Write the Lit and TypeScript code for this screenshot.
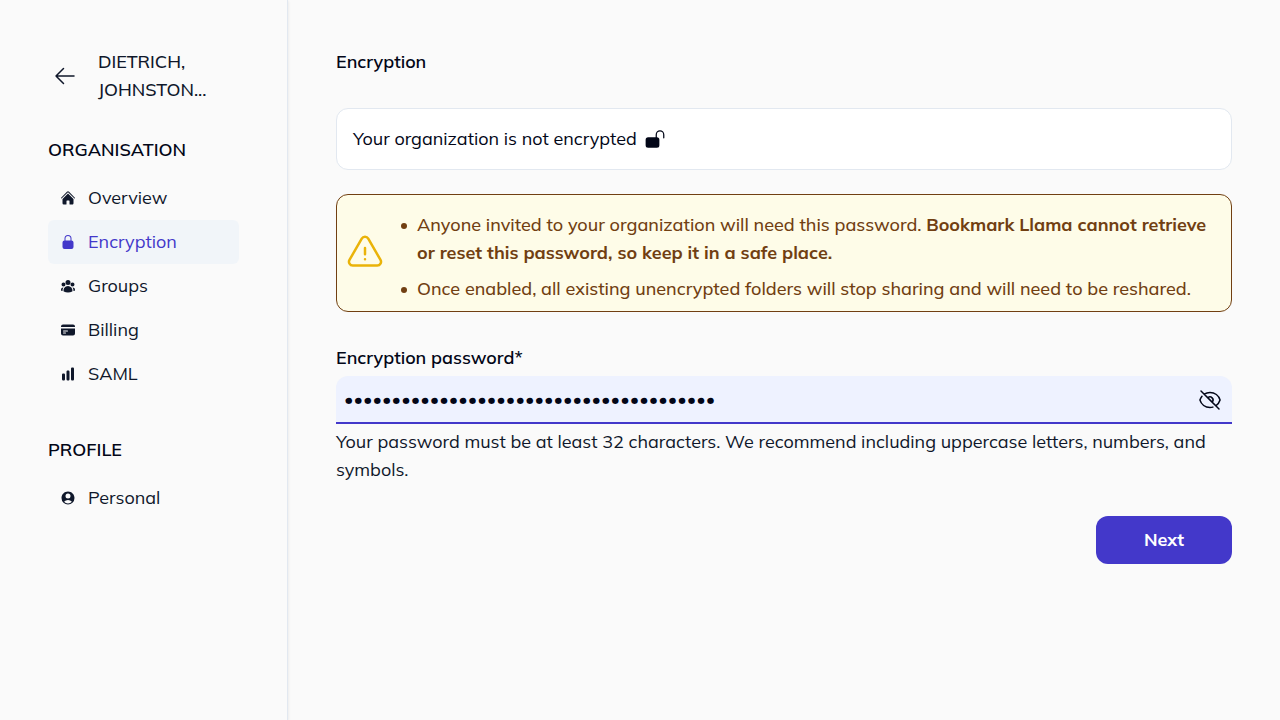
import { LitElement, html, css, svg } from "lit";
import { customElement, state } from "lit/decorators.js";
import { classMap } from "lit/directives/class-map.js";

interface NavItem {
  label: string;
  icon: unknown;
  active?: boolean;
}

interface NavGroup {
  title: string;
  items: NavItem[];
}

const homeIcon = svg`<svg class="icon" viewBox="0 0 24 24" fill="currentColor" aria-hidden="true">
  <path d="M11.47 3.84a.75.75 0 0 1 1.06 0l8.69 8.69a.75.75 0 1 0 1.06-1.06l-8.69-8.69a2.25 2.25 0 0 0-3.18 0l-8.69 8.69a.75.75 0 0 0 1.06 1.06l8.69-8.69Z"/>
  <path d="m12 5.43 8.16 8.16.09.09v6.2c0 1.03-.84 1.87-1.88 1.87H15a.75.75 0 0 1-.75-.75v-4.5a.75.75 0 0 0-.75-.75h-3a.75.75 0 0 0-.75.75V21a.75.75 0 0 1-.75.75H5.63a1.88 1.88 0 0 1-1.88-1.88v-6.2l.09-.08L12 5.43Z"/>
</svg>`;

const lockIcon = svg`<svg class="icon" viewBox="0 0 24 24" fill="currentColor" aria-hidden="true">
  <path fill-rule="evenodd" d="M12 1.5a5.25 5.25 0 0 0-5.25 5.25v3a3 3 0 0 0-3 3v6.75a3 3 0 0 0 3 3h10.5a3 3 0 0 0 3-3v-6.75a3 3 0 0 0-3-3v-3A5.25 5.25 0 0 0 12 1.5Zm3.75 8.25v-3a3.75 3.75 0 1 0-7.5 0v3h7.5Z"/>
</svg>`;

const groupIcon = svg`<svg class="icon" viewBox="0 0 24 24" fill="currentColor" aria-hidden="true">
  <path fill-rule="evenodd" d="M8.25 6.75a3.75 3.75 0 1 1 7.5 0 3.75 3.75 0 0 1-7.5 0ZM15.75 9.75a3 3 0 1 1 6 0 3 3 0 0 1-6 0ZM2.25 9.75a3 3 0 1 1 6 0 3 3 0 0 1-6 0ZM6.31 15.117A6.745 6.745 0 0 1 12 12a6.745 6.745 0 0 1 6.709 7.498.75.75 0 0 1-.372.568A12.696 12.696 0 0 1 12 21.75c-2.305 0-4.47-.612-6.337-1.684a.75.75 0 0 1-.372-.568 6.787 6.787 0 0 1 1.019-4.38Z"/>
  <path d="M5.082 14.254a8.287 8.287 0 0 0-1.308 5.135 9.687 9.687 0 0 1-1.764-.44l-.115-.04a.563.563 0 0 1-.373-.487l-.01-.121a3.75 3.75 0 0 1 3.57-4.047ZM20.226 19.389a8.287 8.287 0 0 0-1.308-5.135 3.75 3.75 0 0 1 3.57 4.047l-.01.121a.563.563 0 0 1-.373.486l-.115.04c-.567.2-1.156.349-1.764.441Z"/>
</svg>`;

const cardIcon = svg`<svg class="icon" viewBox="0 0 24 24" fill="currentColor" aria-hidden="true">
  <path d="M4.5 3.75a3 3 0 0 0-3 3v.75h21v-.75a3 3 0 0 0-3-3h-15Z"/>
  <path fill-rule="evenodd" d="M22.5 9.75h-21v7.5a3 3 0 0 0 3 3h15a3 3 0 0 0 3-3v-7.5Zm-18 3.75a.75.75 0 0 1 .75-.75h6a.75.75 0 0 1 0 1.5h-6a.75.75 0 0 1-.75-.75Zm.75 2.25a.75.75 0 0 0 0 1.5h3a.75.75 0 0 0 0-1.5h-3Z"/>
</svg>`;

const chartIcon = svg`<svg class="icon" viewBox="0 0 24 24" fill="currentColor" aria-hidden="true">
  <path d="M18.375 2.25c-1.035 0-1.875.84-1.875 1.875v15.75c0 1.035.84 1.875 1.875 1.875h.75c1.035 0 1.875-.84 1.875-1.875V4.125c0-1.036-.84-1.875-1.875-1.875h-.75ZM9.75 8.625c0-1.036.84-1.875 1.875-1.875h.75c1.036 0 1.875.84 1.875 1.875v11.25c0 1.035-.84 1.875-1.875 1.875h-.75a1.875 1.875 0 0 1-1.875-1.875V8.625ZM3 13.125c0-1.036.84-1.875 1.875-1.875h.75c1.036 0 1.875.84 1.875 1.875v6.75c0 1.035-.84 1.875-1.875 1.875h-.75A1.875 1.875 0 0 1 3 19.875v-6.75Z"/>
</svg>`;

const userIcon = svg`<svg class="icon" viewBox="0 0 24 24" fill="currentColor" aria-hidden="true">
  <path fill-rule="evenodd" d="M18.685 19.097A9.723 9.723 0 0 0 21.75 12c0-5.385-4.365-9.75-9.75-9.75S2.25 6.615 2.25 12a9.723 9.723 0 0 0 3.065 7.097A9.716 9.716 0 0 0 12 21.75a9.716 9.716 0 0 0 6.685-2.653Zm-12.54-1.285A7.486 7.486 0 0 1 12 15a7.486 7.486 0 0 1 5.855 2.812A8.224 8.224 0 0 1 12 20.25a8.224 8.224 0 0 1-5.855-2.438ZM15.75 9a3.75 3.75 0 1 1-7.5 0 3.75 3.75 0 0 1 7.5 0Z"/>
</svg>`;

const groups: NavGroup[] = [
  {
    title: "ORGANISATION",
    items: [
      { label: "Overview", icon: homeIcon },
      { label: "Encryption", icon: lockIcon, active: true },
      { label: "Groups", icon: groupIcon },
      { label: "Billing", icon: cardIcon },
      { label: "SAML", icon: chartIcon },
    ],
  },
  { title: "PROFILE", items: [{ label: "Personal", icon: userIcon }] },
];

@customElement("app-root")
export class AppRoot extends LitElement {
  static styles = css`
    :host {
      display: flex;
      min-height: 100vh;
      background: #fafafa;
      color: #020617;
      font-family: Mulish, "Noto Sans", sans-serif;
      font-size: 18px;
      line-height: 28px;
    }
    *, *::before, *::after { box-sizing: border-box; }
    h1, h2, p, ul { margin: 0; padding: 0; font-size: inherit; }
    button, input { font: inherit; color: inherit; border: 0; }
    button { cursor: pointer; }
    svg { display: block; flex: none; }

    .sidebar {
      flex: none;
      width: 288px;
      padding: 48px;
      border-right: 1px solid #e2e8f0;
      box-shadow: 0 1px 3px rgba(0, 0, 0, 0.1);
    }
    .org {
      display: flex;
      align-items: center;
      gap: 16px;
      margin-bottom: 32px;
      color: #0f172a;
      font-weight: 500;
    }
    .back {
      display: grid;
      place-items: center;
      width: 34px;
      height: 34px;
      padding: 0;
      background: none;
    }
    .org-name { flex: 1; min-width: 0; }
    .group { margin-bottom: 40px; }
    .group-title { margin-bottom: 12px; font-weight: 600; }
    .list { list-style: none; }
    .item {
      display: flex;
      align-items: center;
      gap: 12px;
      padding: 8px 12px;
      border-radius: 6px;
      color: #0f172a;
      text-decoration: none;
    }
    .item.active { background: #f1f5f9; color: #4338ca; }
    .icon { width: 16px; height: 16px; }

    .main {
      flex: 1;
      min-width: 0;
      padding: 48px;
    }
    .title { margin-bottom: 32px; font-weight: 600; }
    .status {
      display: flex;
      align-items: center;
      gap: 8px;
      margin-bottom: 24px;
      padding: 16px;
      border: 1px solid #e2e8f0;
      border-radius: 12px;
      background: #fff;
    }
    .warning {
      display: flex;
      align-items: center;
      gap: 20px;
      margin-bottom: 32px;
      padding: 8px 16px 8px 8px;
      border: 1px solid #713f12;
      border-radius: 12px;
      background: #fefce8;
      color: #713f12;
      font-weight: 500;
    }
    .warning strong { font-weight: 700; }
    .warning-icon { color: #eab308; }
    .points {
      display: grid;
      gap: 8px;
      padding-top: 8px;
      list-style: none;
    }
    .point { display: flex; gap: 10px; margin-left: -4px; }
    .point::before {
      content: "";
      flex: none;
      width: 6px;
      height: 6px;
      margin-top: 12px;
      border-radius: 50%;
      background: currentColor;
    }
    .label { display: block; margin-bottom: 4px; font-weight: 600; }
    .field {
      display: flex;
      align-items: center;
      height: 48px;
      padding: 0 8px;
      border-radius: 12px 12px 0 0;
      background: linear-gradient(#4338ca, #4338ca) bottom / 100% 2px no-repeat #eef2ff;
    }
    .password {
      flex: 1;
      min-width: 0;
      padding: 0;
      background: none;
      outline: none;
    }
    .reveal { padding: 0 2px; background: none; }
    .hint { margin: 4px 0 32px; color: #0f172a; }
    .actions { display: flex; justify-content: flex-end; }
    .next {
      padding: 10px 48px;
      border-radius: 12px;
      background: #4338ca;
      color: #fff;
      font-weight: 700;
    }
  `;

  @state() private shown = false;

  render() {
    return html`
      <aside class="sidebar">
        <div class="org">
          <button class="back" type="button" aria-label="Back">
            <svg width="24" height="24" viewBox="0 0 24 24" fill="none" stroke="currentColor" stroke-width="1.5" stroke-linecap="round" stroke-linejoin="round">
              <path d="M10.5 19.5 3 12m0 0 7.5-7.5M3 12h18" />
            </svg>
          </button>
          <div class="org-name">DIETRICH, JOHNSTON...</div>
        </div>
        <nav>
          ${groups.map((group) => html`
            <section class="group">
              <h2 class="group-title">${group.title}</h2>
              <ul class="list">
                ${group.items.map((item) => html`
                  <li>
                    <a href="#" class=${classMap({ item: true, active: !!item.active })}>${item.icon}<span>${item.label}</span></a>
                  </li>`)}
              </ul>
            </section>`)}
        </nav>
      </aside>
      <main class="main">
        <h1 class="title">Encryption</h1>
        <div class="status">
          <span>Your organization is not encrypted</span>
          <svg width="20" height="20" viewBox="0 0 24 24" fill="currentColor" aria-hidden="true">
            <path d="M18 1.5c2.9 0 5.25 2.35 5.25 5.25v3.75a.75.75 0 0 1-1.5 0V6.75a3.75 3.75 0 1 0-7.5 0v3a3 3 0 0 1 3 3v6.75a3 3 0 0 1-3 3H3.75a3 3 0 0 1-3-3v-6.75a3 3 0 0 1 3-3h9v-3c0-2.9 2.35-5.25 5.25-5.25Z" />
          </svg>
        </div>
        <div class="warning">
          <svg class="warning-icon" width="40" height="40" viewBox="0 0 24 24" fill="none" stroke="currentColor" stroke-width="1.5" stroke-linecap="round" stroke-linejoin="round" aria-hidden="true">
            <path d="M12 9v3.75m-9.303 3.376c-.866 1.5.217 3.374 1.948 3.374h14.71c1.73 0 2.813-1.874 1.948-3.374L13.949 3.378c-.866-1.5-3.032-1.5-3.898 0L2.697 16.126ZM12 15.75h.007v.008H12v-.008Z" />
          </svg>
          <ul class="points">
            <li class="point"><span>Anyone invited to your organization will need this password. <strong>Bookmark Llama cannot retrieve or reset this password, so keep it in a safe place.</strong></span></li>
            <li class="point"><span>Once enabled, all existing unencrypted folders will stop sharing and will need to be reshared.</span></li>
          </ul>
        </div>
        <form @submit=${(e: Event) => e.preventDefault()}>
          <label class="label" for="password">Encryption password*</label>
          <div class="field">
            <input id="password" class="password" type=${this.shown ? "text" : "password"} .value=${"x".repeat(39)} aria-describedby="hint" />
            <button class="reveal" type="button" aria-label="Show password" @click=${() => (this.shown = !this.shown)}>
              <svg width="24" height="24" viewBox="0 0 24 24" fill="none" stroke="currentColor" stroke-width="1.5" stroke-linecap="round" stroke-linejoin="round">
                <path d="M3.98 8.223A10.477 10.477 0 0 0 1.934 12C3.226 16.338 7.244 19.5 12 19.5c.993 0 1.953-.138 2.863-.395M6.228 6.228A10.451 10.451 0 0 1 12 4.5c4.756 0 8.773 3.162 10.065 7.498a10.522 10.522 0 0 1-4.293 5.774M6.228 6.228 3 3m3.228 3.228 3.65 3.65m7.894 7.894L21 21m-3.228-3.228-3.65-3.65m0 0a3 3 0 1 0-4.243-4.243m4.242 4.242L9.88 9.88" />
              </svg>
            </button>
          </div>
          <p id="hint" class="hint">Your password must be at least 32 characters. We recommend including uppercase letters, numbers, and symbols.</p>
          <div class="actions"><button class="next" type="submit">Next</button></div>
        </form>
      </main>
    `;
  }
}
